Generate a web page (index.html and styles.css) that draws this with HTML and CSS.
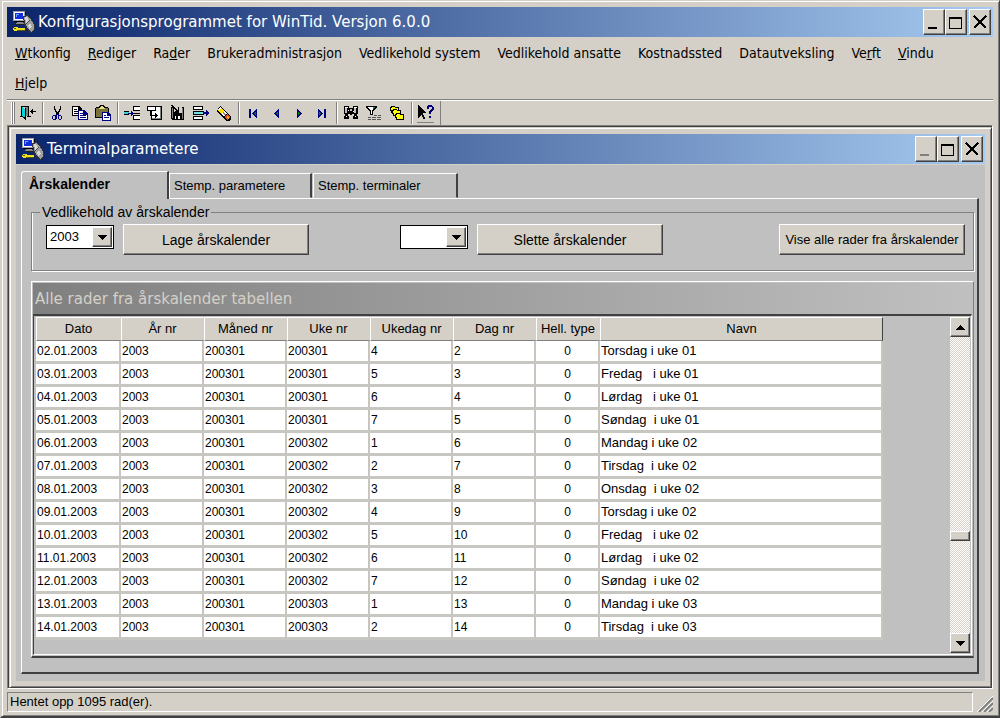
FILE: index.html
```html
<!DOCTYPE html>
<html lang="no">
<head>
<meta charset="utf-8">
<title>Konfigurasjonsprogrammet for WinTid</title>
<link rel="stylesheet" href="styles.css">
</head>
<body>
<svg width="0" height="0" class="defs" aria-hidden="true">
  <symbol id="app" viewBox="0 0 22 22">
    <path fill="#a0a0a8" d="M0 0h12v10H0z"/><path fill="#fff" d="M1 1h10v8H1z"/><path fill="#000" d="M12 1h1v10H1v-1h11z"/>
    <path fill="#1030e0" d="M2 2h8v6H2z"/><path fill="#70a0ff" d="M3 3h3v1H4v2H3z"/>
    <path fill="#888" d="M4 11h6v1h2v2H3v-2h1z"/><path fill="#222" d="M3 13h8v1H3z"/>
    <path fill="#333" d="M10 5l4-1 3 2 5 8v5l-4 3-4-3-3-6z"/>
    <path fill="#a0a0a0" d="M11 6l3-1 3 2 4 7v4l-3 3-3-3-3-6z"/><path fill="#d8d8d8" d="M12 6h2l2 4-3 2zM15 14l2-2 2 4-3 2z"/>
    <path fill="#444" d="M13 12l4-3v1l-4 3z"/>
    <path fill="#f0e020" d="M1 16h3l1 1h7v2h-1v1h-1v-1H9v1H8v-1H5l-1 1H1l-1-2z"/><path fill="#605800" d="M1 17h2v1H1zM4 19h8v1H4z"/>
  </symbol>
  <symbol id="min" viewBox="0 0 18 22"><path fill="currentColor" d="M3 16h9v2H3z"/></symbol>
  <symbol id="max" viewBox="0 0 18 22"><path fill="none" stroke="#000" d="M2.500 6.500h12v11h-12zM2 7.500h13"/></symbol>
  <symbol id="close" viewBox="0 0 18 22"><path fill="none" stroke="#000" stroke-width="2" d="M3 5l12 12M15 5L3 17"/></symbol>
  <symbol id="down" viewBox="0 0 9 5"><path d="M0 0h9v1H8v1H7v1H6v1H5v1H4V4H3V3H2V2H1V1H0z"/></symbol>
  <symbol id="up" viewBox="0 0 9 5"><path d="M0 5h9V4H8V3H7V2H6V1H5V0H4v1H3v1H2v1H1v1H0z"/></symbol>
</svg>

<div class="window">
  <header class="titlebar">
    <svg class="appicon"><use href="#app"/></svg>
    <h1>Konfigurasjonsprogrammet for WinTid. Versjon 6.0.0</h1>
    <div class="controls">
      <button aria-label="Minimer"><svg><use href="#min"/></svg></button>
      <button aria-label="Maksimer"><svg><use href="#max"/></svg></button>
      <button class="x" aria-label="Lukk"><svg><use href="#close"/></svg></button>
    </div>
  </header>

  <nav class="menu">
    <button><u>W</u>tkonfig</button>
    <button><u>R</u>ediger</button>
    <button>Ra<u>d</u>er</button>
    <button>Brukeradministrasjon</button>
    <button>Vedlikehold system</button>
    <button>Vedlikehold ansatte</button>
    <button>Kostnadssted</button>
    <button>Datautveksling</button>
    <button>Ve<u>r</u>ft</button>
    <button><u>V</u>indu</button>
    <button><u>H</u>jelp</button>
  </nav>

  <div class="toolbar" role="toolbar" aria-label="Verktøy">
    <span class="grip"></span>
    <button aria-label="Avslutt"><svg viewBox="0 0 16 16"><path d="M1 1h8v10H7V2H2v9H1zM0 11h3v1H0zM7 11h4v1H7z"/><path fill="#808080" d="M5 2h3v9H5z"/><path fill="#00d8d8" d="M2 2l3 2v10l-3-3z"/><path d="M5 3h1v12H5V14H4v-1H3v-1h2zM10 6h1V5h1V4h1v2h3v1h-3v2h-1V8h-1V7h-1z"/></svg></button>
    <span class="sep"></span>
    <button aria-label="Klipp ut"><svg viewBox="0 0 16 16"><path d="M5 1h1v3h1v2h1v1h1V6h1V4h1V1h1v4h-1v2h-1v2H9v1H8V9H7V7H6V5H5z"/><path fill="#000080" fill-rule="evenodd" d="M4 10h3V9h1v5H7v1H4v-1H3v-3h1zm0 1v3h2v-3zM9 9h1v1h2v1h1v3h-1v1h-2v-1H9zm1 2v3h2v-3z"/></svg></button>
    <button aria-label="Kopier"><svg viewBox="0 0 16 16"><path d="M0 1h7l3 3v7H0z"/><path fill="#fff" d="M1 2h5v3h3v5H1z"/><path d="M2 4h3v1H2zM2 6h5v1H2zM2 8h5v1H2z"/><path fill="#000080" d="M6 5h6l4 4v6H6z"/><path fill="#fff" d="M7 6h4v4h4v4H7z"/><path fill="#000080" d="M8 8h3v1H8zM8 10h6v1H8zM8 12h6v1H8zM12 7h1v2h2v1h-3z"/></svg></button>
    <button aria-label="Lim inn"><svg viewBox="0 0 16 16"><path d="M1 2h3V1h1V0h4v1h1v1h3v1h1v10H0V3h1z"/><path fill="#77723a" d="M1 3h12v9H1z"/><path fill="#e8e080" d="M4 3h1V2h1V1h2v1h1v1h1v1H4z"/><path fill="#000080" d="M7 7h6l3 3v6H7z"/><path fill="#fff" d="M8 8h4v3h3v4H8z"/><path fill="#000080" d="M9 10h2v1H9zM9 12h5v1H9zM12 8h1v2h2v1h-3z"/></svg></button>
    <span class="sep"></span>
    <button aria-label="Sett inn rad"><svg viewBox="0 0 16 16"><path d="M9 1h7v5H9zM9 10h7v5H9z"/><path fill="#fff" d="M10 2h6v3h-6zM10 11h6v3h-6z"/><path fill="#40d0d0" d="M0 7h5v2H0z"/><path fill="#000080" d="M4 8h3V6h1v1h1v1h1v1H9v1H8v1H7V9H4z"/><path d="M0 6h5v1H0zM0 9h5v1H0zM10 8h6v1h-6z"/></svg></button>
    <button aria-label="Dupliser rad"><svg viewBox="0 0 16 16"><path d="M4 1h11v14H4z"/><path fill="#fff" d="M5 2h9v12H5z"/><path fill="#808080" d="M13 2h1v12H5v-1h8z"/><path d="M0 1h9v5H0z"/><path fill="#fff" d="M1 2h7v3H1z"/><path d="M3 6h1v4h4V8h1v1h1v1h1v1h-1v1H9v1H8v-2H3z"/></svg></button>
    <button aria-label="Lagre"><svg viewBox="0 0 16 16"><path d="M1 2h13v13H3l-2-1z"/><path fill="#d4d0c8" d="M4 2h8v6H4z"/><path fill="#808080" d="M2 3h1v10H2zM12 3h1v11h-1z"/><path fill="#fff" d="M5 11h5v3H5z"/><path d="M6 11h2v3H6zM1 0h2v1h1v1h1v1h1v1h1v1h1V2h1v6H3V7h2V6h1V5H5V4H4V3H3V2H2V1H1z"/></svg></button>
    <button aria-label="Slett rad"><svg viewBox="0 0 16 16"><path d="M0 1h10v4H0zM0 11h10v4H0zM0 6h11v4H0z"/><path fill="#fff" d="M1 2h8v2H1zM1 12h8v2H1z"/><path fill="#70e0e0" d="M1 7h9v2H1z"/><path fill="#000080" d="M10 7h3V5h1v1h1v1h1v2h-1v1h-1v1h-1V9h-3z"/></svg></button>
    <button aria-label="Visk ut"><svg viewBox="0 0 16 16"><path d="M4 1l11 10v3l-2 2h-3L1 6z"/><path fill="#ffe000" d="M4 2l4 4-3 3-4-4z"/><path fill="#fff" d="M2 5l2-3 1 1-2 3zM8 6l3 2-3 4-3-3z"/><path fill="#888" d="M7 7l3 2-1 1-3-2z"/><path fill="#e05020" d="M11 9l3 3-1 2-2 1-3-3z"/><path fill="#ffc020" d="M11 11l2 2-1 1-2-2z"/></svg></button>
    <span class="sep"></span>
    <button aria-label="Første"><svg viewBox="0 0 16 16"><path fill="#000080" d="M4 4h2v9H4zM11 4h1v9h-1v-1h-1v-1H9v-1H8V9H7V8h1V7h1V6h1V5h1z"/><path fill="#008000" d="M9 8h1V7h1v3h-1V9H9z"/></svg></button>
    <button aria-label="Forrige"><svg viewBox="0 0 16 16"><path fill="#000080" d="M10 4h1v9h-1v-1H9v-1H8v-1H7V9H6V8h1V7h1V6h1V5h1z"/><path fill="#008000" d="M8 8h1V7h1v3H9V9H8z"/></svg></button>
    <button aria-label="Neste"><svg viewBox="0 0 16 16"><path fill="#000080" d="M6 4h1v1h1v1h1v1h1v1h1v1h-1v1H9v1H8v1H7v1H6z"/><path fill="#008000" d="M7 7h1v1h1v1H8v1H7z"/></svg></button>
    <button aria-label="Siste"><svg viewBox="0 0 16 16"><path fill="#000080" d="M10 4h2v9h-2zM4 4h1v1h1v1h1v1h1v1h1v1H8v1H7v1H6v1H5v1H4z"/><path fill="#008000" d="M5 7h1v1h1v1H6v1H5z"/></svg></button>
    <span class="sep"></span>
    <button aria-label="Søk"><svg viewBox="0 0 16 16"><path d="M1 1h5v2h4V1h5v8h-1v2h1v3h-5v-3h1V9H9v1H7V9H5v2h1v3H1v-3h1V9H1z"/><path fill="#c0c0c0" d="M2 3h2v5H2zM11 3h2v5h-2zM7 4h2v2H7z"/><path fill="#fff" d="M2 2h3v1H2zM11 2h3v1h-3zM3 11h1v1H3zM12 11h1v1h-1zM5 5h1v1H5zM10 6h1v1h-1z"/></svg></button>
    <button aria-label="Filter"><svg viewBox="0 0 16 16"><path d="M0 1h11v2h-1v1H9v1H8v1H7v4H4V6H3V5H2V4H1V3H0z"/><path fill="#fff" d="M2 2h7v1H8v1H7v1H6v4H5V5H4V4H3V3H2z"/><path fill="#008080" d="M7 2h2v1H8v1H7z"/><path fill="#555" d="M8 10h3v1H8zM12 10h3v1h-3zM2 12h3v1H2zM6 12h4v1H6zM11 12h4v1h-4zM2 14h3v1H2zM6 14h4v1H6zM11 14h4v1h-4z"/></svg></button>
    <button aria-label="Sorter"><svg viewBox="0 0 16 16"><g fill="#ffff00" stroke="#000"><path d="M1.500 3.500l1-2h3l1 1h3v5h-7z"/><path d="M3.500 6.500l1-2h3l1 1h3v5h-7z"/><path d="M6.500 10.500l1-2h3l1 1h3v5h-7z"/></g></svg></button>
    <span class="sep"></span>
    <button aria-label="Hjelp" class="help"><svg viewBox="0 0 16 16"><path d="M0 0h1v1h1v1h1v1h1v1h1v1h1v1h1v1h1v1H5v2h1v2h1v2H5v-2H4v-2H3v1H2v1H1v1H0z"/><path fill="#000080" d="M9 1h1V0h4v1h1v1h1v3h-1v1h-1v1h-1v2h-2V6h1V5h1V4h1V2h-3v2H9zM11 11h2v2h-2z"/></svg></button>
    <span class="endsep"></span>
  </div>

  <main class="mdi">
    <section class="child">
      <header class="titlebar">
        <svg class="appicon"><use href="#app"/></svg>
        <h2>Terminalparametere</h2>
        <div class="controls">
          <button aria-label="Minimer" disabled><svg><use href="#min"/></svg></button>
          <button aria-label="Maksimer"><svg><use href="#max"/></svg></button>
          <button class="x" aria-label="Lukk"><svg><use href="#close"/></svg></button>
        </div>
      </header>
      <div class="client">
        <div class="tabs" role="tablist">
          <button role="tab" aria-selected="true" class="tab active">Årskalender</button>
          <button role="tab" aria-selected="false" class="tab">Stemp. parametere</button>
          <button role="tab" aria-selected="false" class="tab last">Stemp. terminaler</button>
        </div>
        <div class="page" role="tabpanel">
          <fieldset class="group">
            <legend>Vedlikehold av årskalender</legend>
            <div class="combo"><select aria-label="År som skal lages"><option>2003</option></select><span><svg><use href="#down"/></svg></span></div>
            <button class="push">Lage årskalender</button>
            <div class="combo second"><select aria-label="År som skal slettes"><option></option></select><span><svg><use href="#down"/></svg></span></div>
            <button class="push">Slette årskalender</button>
            <button class="push end">Vise alle rader fra årskalender</button>
          </fieldset>

          <section class="gridpanel">
            <h3>Alle rader fra årskalender tabellen</h3>
            <div class="well">
              <table>
                <colgroup><col class="c-date"><col class="c-num"><col class="c-num"><col class="c-num"><col class="c-num"><col class="c-num"><col class="c-type"><col class="c-name"></colgroup>
                <thead><tr><th>Dato</th><th>År nr</th><th>Måned nr</th><th>Uke nr</th><th>Ukedag nr</th><th>Dag nr</th><th>Hell. type</th><th>Navn</th></tr></thead>
                <tbody>
                  <tr><td>02.01.2003</td><td>2003</td><td>200301</td><td>200301</td><td>4</td><td>2</td><td>0</td><td>Torsdag i uke 01</td></tr>
                  <tr><td>03.01.2003</td><td>2003</td><td>200301</td><td>200301</td><td>5</td><td>3</td><td>0</td><td>Fredag   i uke 01</td></tr>
                  <tr><td>04.01.2003</td><td>2003</td><td>200301</td><td>200301</td><td>6</td><td>4</td><td>0</td><td>Lørdag   i uke 01</td></tr>
                  <tr><td>05.01.2003</td><td>2003</td><td>200301</td><td>200301</td><td>7</td><td>5</td><td>0</td><td>Søndag  i uke 01</td></tr>
                  <tr><td>06.01.2003</td><td>2003</td><td>200301</td><td>200302</td><td>1</td><td>6</td><td>0</td><td>Mandag i uke 02</td></tr>
                  <tr><td>07.01.2003</td><td>2003</td><td>200301</td><td>200302</td><td>2</td><td>7</td><td>0</td><td>Tirsdag  i uke 02</td></tr>
                  <tr><td>08.01.2003</td><td>2003</td><td>200301</td><td>200302</td><td>3</td><td>8</td><td>0</td><td>Onsdag  i uke 02</td></tr>
                  <tr><td>09.01.2003</td><td>2003</td><td>200301</td><td>200302</td><td>4</td><td>9</td><td>0</td><td>Torsdag i uke 02</td></tr>
                  <tr><td>10.01.2003</td><td>2003</td><td>200301</td><td>200302</td><td>5</td><td>10</td><td>0</td><td>Fredag   i uke 02</td></tr>
                  <tr><td>11.01.2003</td><td>2003</td><td>200301</td><td>200302</td><td>6</td><td>11</td><td>0</td><td>Lørdag   i uke 02</td></tr>
                  <tr><td>12.01.2003</td><td>2003</td><td>200301</td><td>200302</td><td>7</td><td>12</td><td>0</td><td>Søndag  i uke 02</td></tr>
                  <tr><td>13.01.2003</td><td>2003</td><td>200301</td><td>200303</td><td>1</td><td>13</td><td>0</td><td>Mandag i uke 03</td></tr>
                  <tr><td>14.01.2003</td><td>2003</td><td>200301</td><td>200303</td><td>2</td><td>14</td><td>0</td><td>Tirsdag  i uke 03</td></tr>
                </tbody>
              </table>
              <div class="scroll">
                <button aria-label="Rull opp"><svg><use href="#up"/></svg></button>
                <span class="before"></span><span class="thumb"></span><span class="after"></span>
                <button aria-label="Rull ned"><svg><use href="#down"/></svg></button>
              </div>
            </div>
          </section>
        </div>
      </div>
    </section>
  </main>

  <footer class="status">
    <p>Hentet opp 1095 rad(er).</p>
    <svg viewBox="0 0 16 16"><path stroke="#fff" d="M0 16L16 0M5 16L16 5M10 16l6-6"/><path stroke="#808080" stroke-width="2" d="M2 16L16 2M7 16l9-9M12 16l4-4"/></svg>
  </footer>
</div>
</body>
</html>
```
FILE: styles.css
```css
* { box-sizing: border-box; }
body { margin: 0; background: #d4d0c8; color: #000; font: 13px/16px "Liberation Sans", Arial, sans-serif; }
h1, h2, h3, p { margin: 0; font-weight: normal; }
button, select { font: inherit; color: inherit; margin: 0; padding: 0; border: 0; background: none; border-radius: 0; }
svg { display: block; shape-rendering: crispEdges; }
.defs { position: absolute; }

.window {
  min-height: 100vh; display: flex; flex-direction: column; padding: 6px 6px 4px 5px;
  border: 1px solid; border-color: #d4d0c8 #404040 #404040 #d4d0c8;
  box-shadow: inset 1px 1px #fff, inset -1px -1px #808080;
  border-width: 1px 1px 2px 2px;
}

.titlebar { display: flex; align-items: center; height: 30px; padding: 0 2px 0 6px; color: #fff; background: linear-gradient(90deg, #0a246a, #a6caf0); }
.appicon { width: 22px; height: 22px; }
.titlebar h1, .titlebar h2 { flex: 1; margin-left: 3px; font: 15px/20px "DejaVu Sans", Verdana, sans-serif; white-space: nowrap; }
.controls { display: flex; color: #000; }
.controls button { width: 22px; height: 26px; padding: 1px; }
.controls .x { margin-left: 2px; }
.controls svg { width: 18px; height: 22px; }
.controls button:disabled { color: #808080; }

.controls button, .combo span, .scroll button, .thumb, .push {
  background: #d4d0c8; border: 1px solid; border-color: #fff #404040 #404040 #fff; box-shadow: inset -1px -1px #808080;
}

.menu { display: flex; flex-wrap: wrap; padding: 1px 24px 1px 8px; column-gap: 17px; }
.menu button { height: 30px; font: 14px/30px "DejaVu Sans Condensed", "DejaVu Sans", Tahoma, sans-serif; }

.toolbar { display: flex; align-items: center; height: 26px; border-top: 1px solid #808080; box-shadow: inset 0 1px #fff; }
.toolbar button { width: 23px; height: 22px; display: grid; place-items: center; }
.toolbar button svg { width: 16px; height: 16px; }
.grip { width: 9px; height: 22px; background: linear-gradient(90deg, transparent 4px, #fff 4px 5px, #808080 5px 6px, #fff 6px 7px, #808080 7px 8px, transparent 8px); }
.sep { width: 6px; height: 22px; background: linear-gradient(90deg, transparent 3px, #808080 3px 4px, #fff 4px 5px, transparent 5px); }
.endsep { width: 4px; height: 24px; border-right: 1px solid #808080; }
.toolbar .help { position: relative; }
.help::after { content: ""; position: absolute; left: 3px; right: 3px; bottom: 1px; height: 1px; background: #808080; }

.mdi { flex: 1; display: flex; border: 1px solid; border-color: #808080 #fff #fff #808080; box-shadow: inset 1px 1px #404040; padding: 1px 0 0 1px; }
.child { flex: 1; display: flex; flex-direction: column; padding: 6px; border: 1px solid; border-color: #d4d0c8 #404040 #404040 #d4d0c8; box-shadow: inset 1px 1px #fff, inset -1px -1px #808080; }
.client { flex: 1; display: flex; flex-direction: column; margin-top: 1px; padding: 6px 6px 7px 5px; background: #c0c0c0; }

.tabs { display: flex; align-items: flex-end; height: 27px; }
.tab { height: 25px; width: 143px; padding: 0 0 0 4px; text-align: left; border: 1px solid; border-color: #fff #404040 transparent #fff; border-right-width: 2px; }
.tab.last { width: 145px; margin-left: 1px; padding-left: 4px; }
.tab.active { width: 148px; height: 28px; margin-bottom: -1px; padding: 0 0 3px 7px; font-weight: bold; font-size: 14px; background: #c0c0c0; z-index: 1; border-bottom: 0; border-radius: 3px 0 0 0; }

.page { flex: 1; display: flex; flex-direction: column; padding: 5px 3px 14px 9px; border: 1px solid; border-color: #fff #404040 #404040 #fff; border-bottom-width: 2px; border-right-width: 2px; }
.group { display: flex; align-items: flex-start; height: 67px; margin: 0; padding: 4px 8px 0 14px; border: 1px solid #808080; box-shadow: inset 1px 0 #fff, 1px 1px #fff; font-size: 14px; }
.group legend { height: 16px; margin-left: -6px; padding: 0 2px; background: #c0c0c0; line-height: 16px; }
.combo { position: relative; width: 68px; height: 24px; margin-top: 1px; border: 1px solid #000; background: #fff; font-size: 13px; }
.combo select { appearance: none; display: block; width: 100%; height: 22px; padding-left: 3px; }
.combo span { position: absolute; right: 1px; top: 1px; width: 20px; height: 20px; display: grid; place-items: center; pointer-events: none; }
.combo svg, .scroll svg { width: 9px; height: 5px; }
.combo.second { margin-left: 91px; }
.push { width: 186px; height: 31px; margin-left: 9px; white-space: nowrap; }
.push.end { margin-left: auto; font-size: 13px; }

.gridpanel { flex: 1; display: flex; flex-direction: column; margin-top: 10px; padding: 1px; border: 1px solid; border-color: #fff #808080 #404040 #fff; border-bottom-width: 2px; }
.gridpanel h3 { height: 31px; padding-left: 2px; font: 15px/32px "DejaVu Sans", Verdana, sans-serif; color: #d4d0c8; background: linear-gradient(90deg, #808080, #c0c0c0); }
.well { flex: 1; display: flex; justify-content: space-between; padding: 1px 1px 1px 2px; border: 1px solid; border-color: #404040 #fff #fff #404040; border-top-width: 2px; }

table { width: 847px; table-layout: fixed; border-spacing: 0; align-self: flex-start; }
.c-date { width: 85px; }
.c-num { width: 83px; }
.c-type { width: 64px; }
th { height: 24px; padding: 0; font-weight: normal; text-align: center; background: #d4d0c8; border: 1px solid; border-color: #fff #d4d0c8 #808080 #fff; }
th:last-child { border-right-color: #404040; }
td { height: 23px; padding: 0 0 1px 1px; white-space: pre; font-size: 12px; background: #fff; border-right: 2px solid #c8c5be; border-bottom: 3px solid #c8c6c0; }
td:nth-child(7) { text-align: center; }
td:nth-child(8) { font-size: 13px; }

.scroll { width: 20px; display: flex; flex-direction: column; background: repeating-conic-gradient(#fff 0 25%, #d4d0c8 0 50%) 0 0 / 2px 2px; }
.scroll button { height: 20px; display: grid; place-items: center; }
.thumb { height: 10px; }
.before { flex: 195; }
.after { flex: 93; }

.status { display: flex; align-items: flex-end; margin-top: 3px; }
.status p { flex: 1; height: 20px; padding-left: 2px; line-height: 18px; border: 1px solid; border-color: #808080 #fff #fff #808080; }
.status svg { width: 16px; height: 16px; margin-left: 4px; shape-rendering: auto; }
```
